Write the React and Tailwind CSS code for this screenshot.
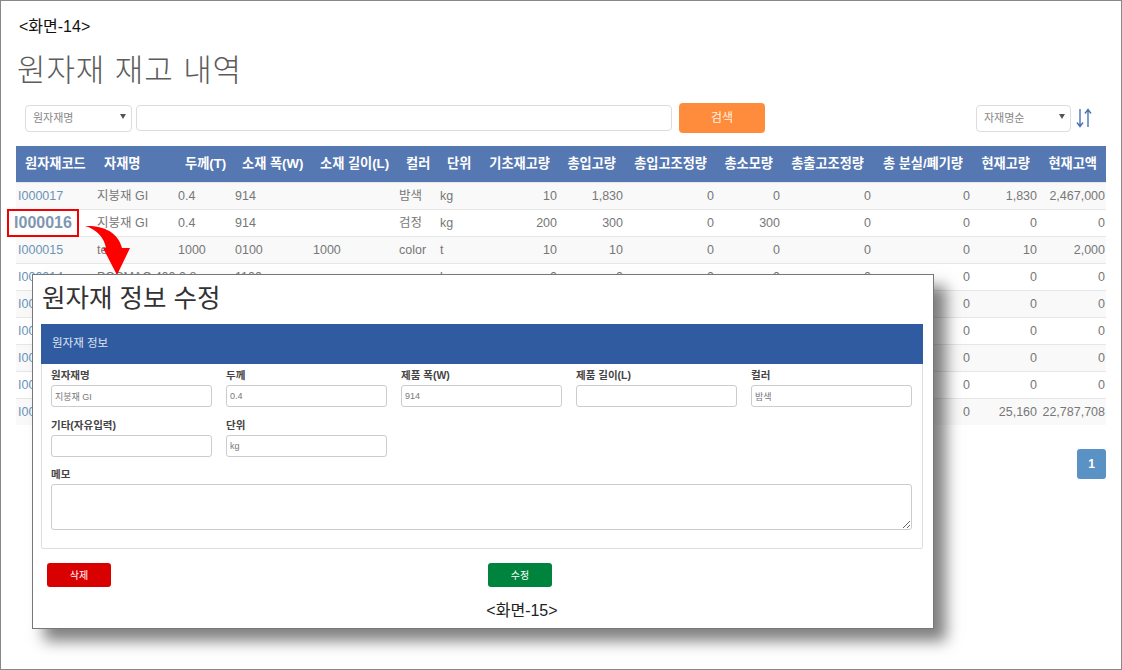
const FONT = 'font-["Liberation_Sans","Noto_Sans_CJK_KR",sans-serif]'

const COLUMNS = [
  { label: '원자재코드', w: 73, th: 'pl-[9px] text-left', td: 'pl-[2px] text-left' },
  { label: '자재명', w: 81, th: 'pl-[15px] text-left', td: 'pl-2 text-left' },
  { label: '두께(T)', w: 57, th: 'pl-[15px] text-left', td: 'pl-2 text-left' },
  { label: '소재 폭(W)', w: 78, th: 'pl-[15px] text-left', td: 'pl-2 text-left' },
  { label: '소재 길이(L)', w: 86, th: 'pl-[15px] text-left', td: 'pl-2 text-left' },
  { label: '컬러', w: 41, th: 'pl-[15px] text-left', td: 'pl-2 text-left' },
  { label: '단위', w: 49, th: 'pl-[15px] text-left', td: 'pl-2 text-left' },
  { label: '기초재고량', w: 78, th: 'pr-[9px] text-right', td: 'pr-[2px] text-right' },
  { label: '총입고량', w: 66, th: 'pr-[9px] text-right', td: 'pr-[2px] text-right' },
  { label: '총입고조정량', w: 91, th: 'pr-[9px] text-right', td: 'pr-[2px] text-right' },
  { label: '총소모량', w: 66, th: 'pr-[9px] text-right', td: 'pr-[2px] text-right' },
  { label: '총출고조정량', w: 91, th: 'pr-[9px] text-right', td: 'pr-[2px] text-right' },
  { label: '총 분실/폐기량', w: 99, th: 'pr-[9px] text-right', td: 'pr-[2px] text-right' },
  { label: '현재고량', w: 67, th: 'pr-[9px] text-right', td: 'pr-[2px] text-right' },
  { label: '현재고액', w: 67, th: 'pr-[9px] text-right', td: 'pr-[1px] text-right' },
]

// I000016 itself is drawn in the red callout below
const ROWS = [
  ['I000017', '지붕재 GI', '0.4', '914', '', '밤색', 'kg', '10', '1,830', '0', '0', '0', '0', '1,830', '2,467,000'],
  ['', '지붕재 GI', '0.4', '914', '', '검정', 'kg', '200', '300', '0', '300', '0', '0', '0', '0'],
  ['I000015', 'test', '1000', '0100', '1000', 'color', 't', '10', '10', '0', '0', '0', '0', '10', '2,000'],
  ['I000014', 'POSMAC 400 0.8', '', '1100', '', '', 'kg', '0', '0', '0', '0', '0', '0', '0', '0'],
  ['I000013', '', '', '', '', '', '', '0', '0', '0', '0', '0', '0', '0', '0'],
  ['I000012', '', '', '', '', '', '', '0', '0', '0', '0', '0', '0', '0', '0'],
  ['I000011', '', '', '', '', '', '', '0', '0', '0', '0', '0', '0', '0', '0'],
  ['I000010', '', '', '', '', '', '', '0', '0', '0', '0', '0', '0', '0', '0'],
  ['I000009', '', '', '', '', '', '', '0', '0', '0', '0', '0', '0', '25,160', '22,787,708'],
]

function FakeSelect({ label, width }) {
  return (
    <div className={`flex h-[27px] ${width} items-center justify-between rounded-[4px] border border-[#ddd] bg-white pl-[7px] pr-[5px] text-[11px] text-[#888]`}>
      <span>{label}</span>
      <svg width="6" height="5" viewBox="0 0 6 5" className="mb-1"><path d="M0 0h6L3 5z" fill="#555" /></svg>
    </div>
  )
}

function Field({ label, value = '' }) {
  return (
    <label className="block">
      <span className="block h-[16px] text-[10.5px] font-bold leading-[16px] text-[#444]">{label}</span>
      <input
        readOnly
        value={value}
        className="mt-[2px] block h-[22px] w-[161px] rounded-[3px] border border-[#ccc] px-[3px] text-[9px] text-[#777] outline-none"
      />
    </label>
  )
}

export default function App() {
  return (
    <div className={`relative h-[670px] w-[1122px] overflow-hidden border border-[#888] bg-white px-[15px] pt-[16px] ${FONT}`}>
      <div className="ml-[3px] h-5 text-[16px] leading-5 text-[#111]">&lt;화면-14&gt;</div>
      <h1 className="ml-[1px] mt-[14px] h-10 text-[31px] font-light leading-10 tracking-[0.9px] text-[#5c5c5c]">원자재 재고 내역</h1>

      {/* search bar */}
      <div className="mt-[12px] flex h-[30px] items-center pl-[9px] pr-[14px]">
        <FakeSelect label="원자재명" width="w-[107px]" />
        <input readOnly className="ml-[4px] h-[26px] w-[536px] rounded-[4px] border border-[#ddd] outline-none" />
        <button className="ml-[7px] h-[30px] w-[86px] rounded-[4px] bg-[#ff8c3c] text-[12px] text-[#fff3e6]">검색</button>
        <div className="ml-auto">
          <FakeSelect label="자재명순" width="w-[95px]" />
        </div>
        <svg width="16" height="20" viewBox="0 0 16 20" className="ml-[5px]" fill="none" stroke="#4a74b5" strokeWidth="1.4">
          <path d="M4 1v17M1 14.5L4 18.5l3-4" />
          <path d="M12 19V2M9 5.5L12 1.5l3 4" />
        </svg>
      </div>

      {/* stock table */}
      <table className="mt-[13px] w-[1090px] table-fixed border-collapse">
        <colgroup>
          {COLUMNS.map(c => <col key={c.label} style={{ width: c.w }} />)}
        </colgroup>
        <thead>
          <tr className="h-[36px] bg-[#5577b2]">
            {COLUMNS.map(c => (
              <th key={c.label} className={`whitespace-nowrap p-0 text-[13.2px] font-bold text-white ${c.th}`}>{c.label}</th>
            ))}
          </tr>
        </thead>
        <tbody>
          {ROWS.map((row, i) => (
            <tr key={i} className={`h-[27px] border-t border-[#e6e6e6] ${i % 2 === 0 ? 'bg-[#f9f9f9]' : 'bg-white'}`}>
              {row.map((cell, j) => (
                <td
                  key={j}
                  className={`overflow-visible whitespace-nowrap p-0 pt-px text-[12.5px] ${j === 0 ? 'text-[#6b93b8]' : 'text-[#777]'} ${COLUMNS[j].td}`}
                >
                  {cell}
                </td>
              ))}
            </tr>
          ))}
        </tbody>
      </table>

      <div className="mt-[24px] flex justify-end">
        <button className="h-[30px] w-[29px] rounded-[3px] bg-[#5b92c6] text-[12px] font-bold text-white">1</button>
      </div>

      {/* callout on the clicked row */}
      <div className="absolute left-[6px] top-[208px] flex h-[28px] w-[72px] items-center justify-center border-2 border-[#f00000] text-[16px] font-bold text-[#7f97b0]">
        I000016
      </div>
      <svg className="absolute left-[84px] top-[224px]" width="46" height="52" viewBox="0 0 46 52">
        <path d="M0 1C16 0 33 6 37 23L45 23L32 50L18 23L21 23C19 12 11 4 0 1Z" fill="#f00" />
      </svg>

      {/* edit dialog */}
      <div className="absolute left-[31px] top-[273px] h-[355px] w-[902px] border border-[#777] bg-white pl-[8px] pr-[10px] shadow-[12px_12px_14px_rgba(0,0,0,0.5)]">
        <h2 className="ml-[1px] mt-[6px] h-[34px] text-[25.5px] leading-[34px] text-[#333]">원자재 정보 수정</h2>
        <div className="mt-[9px] h-[225px] rounded-[2px] border border-[#ddd]">
          <div className="-m-px flex h-[40px] items-center bg-[#315ba1] pl-[11px] text-[11.5px] text-[#dfe6f2]">원자재 정보</div>
          <div className="px-[9px] pt-[4px]">
            <div className="flex gap-[14px]">
              <Field label="원자재명" value="지붕재 GI" />
              <Field label="두께" value="0.4" />
              <Field label="제품 폭(W)" value="914" />
              <Field label="제품 길이(L)" />
              <Field label="컬러" value="밤색" />
            </div>
            <div className="mt-[10px] flex gap-[14px]">
              <Field label="기타(자유입력)" />
              <Field label="단위" value="kg" />
            </div>
            <label className="mt-[9px] block">
              <span className="block h-[16px] text-[10.5px] font-bold leading-[16px] text-[#444]">메모</span>
              <textarea readOnly className="mt-[2px] block h-[46px] w-[861px] rounded-[3px] border border-[#ccc] outline-none" />
            </label>
          </div>
        </div>
        <div className="relative mt-[14px] h-[24px]">
          <button className="absolute left-[6px] h-[24px] w-[64px] rounded-[3px] bg-[#d90000] text-[10px] text-white">삭제</button>
          <button className="absolute left-[447px] h-[24px] w-[64px] rounded-[3px] bg-[#00843d] text-[10px] text-white">수정</button>
        </div>
        <div className="mt-[14px] pl-[80px] text-center text-[16px] leading-5 text-[#222]">&lt;화면-15&gt;</div>
      </div>
    </div>
  )
}
